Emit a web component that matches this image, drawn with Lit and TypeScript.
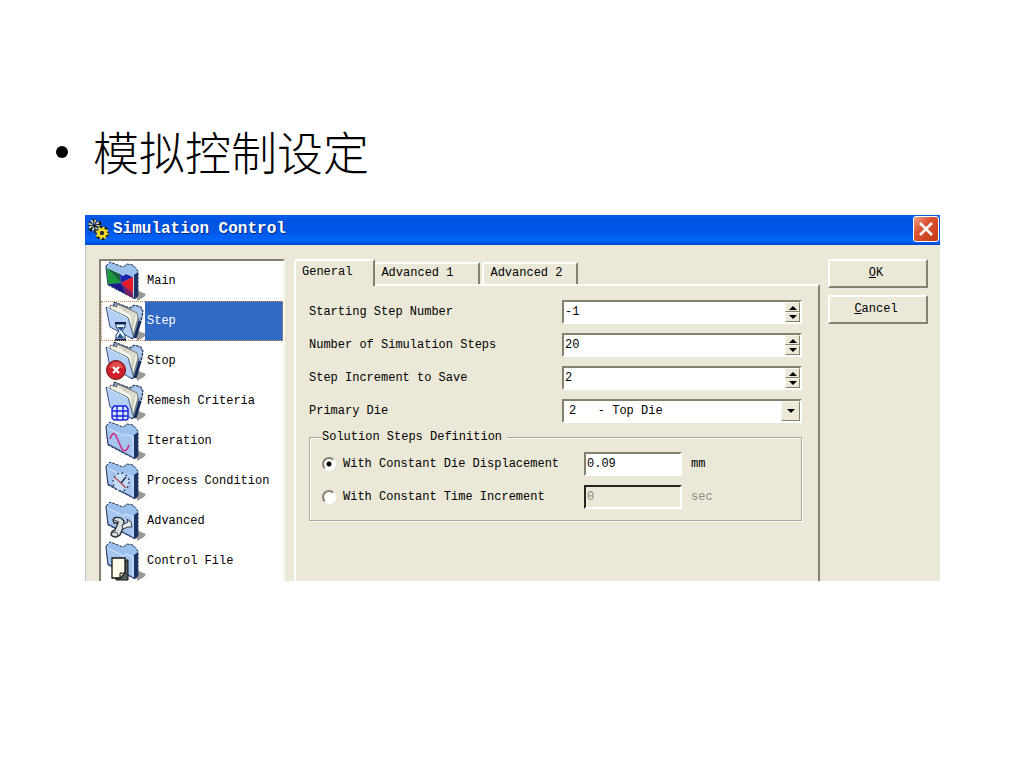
import { LitElement, html, svg, css } from "lit";
import { customElement, state } from "lit/decorators.js";
import { classMap } from "lit/directives/class-map.js";

const shadow = svg`<path d="M35 29 L40 31 L45 33 L43 36 L36 40Z" fill="#777" opacity=".75"/>`;

const closedFolder = svg`
  ${shadow}
  <path d="M5 5 L9 1 L22 6 L26 3 L32 4 L37 10 V35 L34 38 L7 24Z" fill="#9cc0ee" stroke="#26344f" stroke-dasharray="3 1"/>
  <path d="M33 14 L37 11 V35 L33 38Z" fill="#1d3265"/>
  <path d="M5 6 L19 12 L22 14 L25 12 L33 15 L33 37 L7 23Z" fill="#a6c6f0"/>
  <path d="M5 6 L7 23 L33 37" fill="none" stroke="#2b4068"/>
  <path d="M6 7 L19 13 L22 15 L25 13 L32 16 V36" fill="none" stroke="#cfe4ff"/>`;

const openFolder = svg`
  ${shadow}
  <path d="M13 1 L29 7 L33 4 L40 6 L42 10 L41 17 L35 35 L31 38 L10 22Z" fill="#7f9dc5" stroke="#1b2436" stroke-dasharray="3 1"/>
  <path d="M30 8 L34 5 L39 7 L41 11 L40 17 L36 16Z" fill="#a8c9ed"/>
  <path d="M9 4 L16 6 V3 L25 7 L36 12 L37 17 L32 35 L11 21Z" fill="#f2f2e6" stroke="#77786c"/>
  <path d="M18 6 L34 13 L31 30 M22 9 L31 14 V26" fill="none" stroke="#c0c0ad"/>
  <path d="M5 6 L26 16 Q28 17 28 20 L33 37 L30 37 L9 26Z" fill="#b3d0f4" stroke="#40577d"/>
  <path d="M6 7 L26 17" stroke="#e3f0ff"/>
  <path d="M39 20 L34 37" stroke="#162c5a" stroke-width="3"/>`;

const icons: Record<string, unknown> = {
  main: svg`${closedFolder}
    <path d="M6 7 L20 22 L7 23Z" fill="#179a38"/>
    <path d="M6 7 L19 13 L20 22Z" fill="#15623b"/>
    <path d="M19 13 L22 15 L25 13 L32 16 L20 22Z" fill="#1923ad"/>
    <path d="M20 22 L32 16 V32Z" fill="#e51b28"/>
    <path d="M20 22 L32 32 V37 L25 33Z" fill="#7b1b60"/>
    <path d="M20 22 L25 33 L7 23Z" fill="#171a88"/>`,
  step: svg`${openFolder}
    <path d="M14 22 H25 M14 39 H25" stroke="#101c46" stroke-width="2"/>
    <path d="M15 23 H24 V26 L21 30 L24 34 V38 H15 V34 L18 30 L15 26Z" fill="#e4f3fc" stroke="#17306e"/>
    <path d="M16 26 H23 L20 30Z M19 32 L23 37 H16Z" fill="#26508a"/>`,
  stop: svg`${openFolder}
    <circle cx="15" cy="29" r="9.5" fill="#cf2029" stroke="#65151b"/>
    <path d="M8 27 Q10 21 16 21 Q22 22 22 27" fill="#ea6a64" opacity=".6"/>
    <path d="M12 26 L18 32 M18 26 L12 32" stroke="#fff" stroke-width="2.2"/>`,
  remesh: svg`${openFolder}
    <path d="M13 25 H25 L27 28 V38 L25 39 H13 L11 37 V28Z" fill="#d8edff" stroke="#1a20dd" stroke-width="1.4"/>
    <path d="M16 25 V39 M22 25 V39 M11 30 H27 M11 35 H27" stroke="#1a20dd" stroke-width="1.4"/>`,
  iteration: svg`${closedFolder}
    <path d="M9 18 Q12 9 15 15 L21 28 Q25 33 28 24" fill="none" stroke="#cf2c82" stroke-width="1.5"/>`,
  process: svg`${closedFolder}
    <ellipse cx="20" cy="21" rx="8" ry="9" fill="#c5dcf7" stroke="#24324c" stroke-width="1.5" stroke-dasharray="1.5 3"/>
    <path d="M13 16 L20 22 L25 27" fill="none" stroke="#ba5360" stroke-width="1.5"/>
    <path d="M20 22 L25 16" stroke="#24324c" stroke-width="1.5"/>`,
  advanced: svg`${closedFolder}
    <path d="M12 19 Q13 15 20 17 L23 20 L22 27 L19 34 Q14 38 10 34 Q10 30 14 29 L17 22 L13 22Z" fill="#d7dde0" stroke="#262b30" stroke-width="1.3"/>
    <path d="M10 33 Q14 29 17 33 Q17 36 14 36 M13 19 L18 21" stroke="#394047" fill="none"/>
    <path d="M21 24 L27 21 L26 18 L30 21 L31 26 L27 26 L22 28Z" fill="#e7eced" stroke="#343a40"/>`,
  file: svg`${closedFolder}
    <path d="M15 19 H27 V39 H15Z" fill="#4f5b5d" stroke="#111"/>
    <path d="M11 17 H24 V32 L19 37 H11Z" fill="#fffce8" stroke="#161616" stroke-width="1.3"/>
    <path d="M24 32 L19 32 V37Z" fill="#cbc8b2" stroke="#161616"/>`,
};

const sections = [
  ["main", "Main"],
  ["step", "Step"],
  ["stop", "Stop"],
  ["remesh", "Remesh Criteria"],
  ["iteration", "Iteration"],
  ["process", "Process Condition"],
  ["advanced", "Advanced"],
  ["file", "Control File"],
];

const counters = [
  ["start", "Starting Step Number"],
  ["count", "Number of Simulation Steps"],
  ["save", "Step Increment to Save"],
];

@customElement("app-root")
export class AppRoot extends LitElement {
  @state() private section = "step";
  @state() private tab = "General";
  @state() private mode = "die";
  @state() private values: Record<string, string> = { start: "-1", count: "20", save: "2" };

  static styles = css`
    :host {
      display: block;
      min-height: 100vh;
      box-sizing: border-box;
      padding: 122px 84px 24px 85px;
      background: #fff;
      color: #000;
      font: 12px/16px "Liberation Mono", monospace;
    }
    * { box-sizing: border-box; }
    button, input, select { font: inherit; color: inherit; margin: 0; border-radius: 0; }
    .topics {
      list-style: none;
      margin: 0 0 37px -29px;
      padding: 0;
      font: 300 46px/56px "Noto Sans CJK SC", sans-serif;
    }
    .topic { display: flex; align-items: center; gap: 25px; }
    .topic::before { content: ""; width: 12px; height: 12px; margin-top: 4px; border-radius: 50%; background: #000; }
    .dialog { background: #ebe8d7; border-left: 1px solid #b9c3d8; }
    .titlebar {
      display: flex;
      align-items: center;
      gap: 4px;
      height: 30px;
      margin-left: -1px;
      padding: 0 1px 2px 3px;
      background: linear-gradient(#0a5ff0, #0054e3 15%, #0054e3 50%, #0066fc 85%, #0047c8);
      color: #fff;
    }
    .title { flex: 1; margin: 0; font: bold 16px/20px "Liberation Mono", monospace; text-shadow: 1px 1px #0a2a80; }
    .close {
      width: 26px;
      height: 26px;
      padding: 0;
      border: 1px solid #fff;
      border-radius: 3px;
      background: linear-gradient(135deg, #f0a088, #dc5230 40%, #c03a14);
    }
    .close svg, .logo, .item svg { display: block; }
    .body { display: flex; gap: 9px; padding: 14px 12px 0 13px; }
    .sections {
      width: 186px;
      border: 2px solid;
      border-color: #85816f #f8f7f0 #fff #85816f;
      border-bottom: 0;
      background: #fff;
    }
    .item {
      display: flex;
      align-items: center;
      width: 100%;
      height: 40px;
      padding: 0;
      border: 0;
      background: #fff;
      text-align: left;
    }
    .item svg { width: 44px; height: 40px; overflow: visible; }
    .caption { flex: 1; height: 40px; padding-left: 2px; line-height: 40px; white-space: nowrap; }
    .item.on { outline: 1px dotted #c98a50; outline-offset: -1px; }
    .item.on .caption { background: #316ac5; color: #fff; }
    .pages { flex: 1; display: flex; flex-direction: column; min-width: 0; }
    .tabs { display: flex; align-items: flex-end; height: 25px; }
    .tab {
      height: 22px;
      padding: 0 25px 3px 6px;
      border: 2px solid;
      border-color: #fff #85816f transparent #fff;
      border-left-width: 0;
      border-bottom: 0;
      border-radius: 3px 0 0 0;
      background: #ebe8d7;
      margin-right: 2px;
    }
    .tab + .tab + .tab { border-left-width: 2px; padding: 0 14px 3px 6px; margin: 0; }
    .tab.on {
      height: 27px;
      padding: 0 21px 4px 6px;
      border-left-width: 2px;
      margin: 0 0 -2px;
      z-index: 1;
    }
    .panel {
      flex: 1;
      padding: 14px 16px 0 13px;
      border: 2px solid;
      border-color: #fff #85816f #fff #fff;
      border-bottom: 0;
    }
    .rows { display: grid; grid-template-columns: 253px 1fr; row-gap: 9px; align-items: center; }
    .box {
      display: flex;
      height: 24px;
      border: 2px solid;
      border-color: #85816f #fff #fff #85816f;
      background: #fff;
    }
    .field { flex: 1; min-width: 0; width: 100%; padding: 0 1px; border: 0; outline: 0; background: transparent; }
    select.field { appearance: none; padding-left: 5px; }
    .spin { display: grid; grid-template-rows: 10px 10px; width: 15px; }
    .step, .drop {
      display: grid;
      place-items: center;
      padding: 0;
      border: 1px solid;
      border-color: #f8f7f0 #85816f #85816f #f8f7f0;
      background: #ebe8d7;
    }
    .drop { width: 19px; pointer-events: none; }
    .group {
      margin: 6px 0 0;
      padding: 7px 12px 11px;
      min-width: 0;
      border: 1px solid #aca899;
      box-shadow: 1px 1px #fff, inset 1px 1px #fff;
    }
    .legend { padding: 0 5px 0 0; background: #ebe8d7; }
    .choices { display: grid; grid-template-columns: 262px 98px 1fr; row-gap: 9px; align-items: center; }
    .choice { display: flex; align-items: center; gap: 7px; white-space: nowrap; }
    .radio {
      appearance: none;
      width: 14px;
      height: 14px;
      border: 2px solid;
      border-color: #85816f #fff #fff #85816f;
      border-radius: 50%;
      background: #fff;
    }
    .radio:checked { background: radial-gradient(circle, #000 2px, #fff 3px); }
    .unit { padding-left: 9px; }
    .off { color: #8d8a7c; }
    .box.off { background: transparent; border-color: #25241e #fff #fff #25241e; }
    .actions { display: flex; flex-direction: column; gap: 7px; width: 100px; margin-left: -1px; }
    .action {
      height: 29px;
      padding: 0 4px 2px 0;
      border: 2px solid;
      border-color: #fff #85816f #85816f #fff;
      background: #ebe8d7;
    }
  `;

  private bump(key: string, delta: number) {
    this.values = { ...this.values, [key]: String(Number(this.values[key]) + delta) };
  }

  private arrow(up: boolean) {
    return html`<svg width="8" height="5" viewBox="0 0 8 5" aria-hidden="true">
      <path d=${up ? "M0 5 L4 1 L8 5Z" : "M0 0 L4 4 L8 0Z"} />
    </svg>`;
  }

  private amount(id: string, label: string, value: string, unit: string) {
    const off = this.mode !== id;
    return html`
      <label class="choice">
        <input class="radio" type="radio" name="mode" .checked=${!off} @change=${() => (this.mode = id)} />
        ${label}
      </label>
      <span class=${classMap({ box: true, off })}>
        <input class="field" aria-label=${label} .value=${value} ?disabled=${off} />
      </span>
      <span class=${classMap({ unit: true, off })}>${unit}</span>
    `;
  }

  render() {
    return html`
      <ul class="topics"><li class="topic">模拟控制设定</li></ul>
      <section class="dialog" aria-labelledby="title">
        <header class="titlebar">
          <svg class="logo" width="21" height="22" viewBox="0 0 21 22" aria-hidden="true">
            <circle cx="7" cy="8" r="4" fill="none" stroke="#15180f" stroke-width="6" stroke-dasharray="2.6 1.6" />
            <circle cx="6" cy="7" r="3.6" fill="none" stroke="#d9d9b8" stroke-width="4" stroke-dasharray="1.4 1.4" />
            <circle cx="7" cy="8" r="1.5" fill="#1c1c14" />
            <circle cx="14" cy="15" r="4.5" fill="none" stroke="#17170b" stroke-width="5" stroke-dasharray="3 1.5" />
            <circle cx="14" cy="15" r="3.5" fill="none" stroke="#efd529" stroke-width="3" />
            <circle cx="14" cy="15" r="5.5" fill="none" stroke="#efd529" stroke-width="2" stroke-dasharray="2 2.3" />
            <circle cx="14" cy="15" r="2" fill="#2d290a" />
          </svg>
          <h1 class="title" id="title">Simulation Control</h1>
          <button class="close" aria-label="Close">
            <svg width="24" height="24" viewBox="0 0 24 24"><path d="M6 6 L18 18 M18 6 L6 18" stroke="#fff" stroke-width="2.5" /></svg>
          </button>
        </header>
        <div class="body">
          <nav class="sections">
            ${sections.map(
              ([id, name]) => html`
                <button class=${classMap({ item: true, on: this.section === id })} @click=${() => (this.section = id)}>
                  <svg viewBox="0 0 44 40" aria-hidden="true">${icons[id]}</svg>
                  <span class="caption">${name}</span>
                </button>
              `
            )}
          </nav>
          <div class="pages">
            <div class="tabs" role="tablist">
              ${["General", "Advanced 1", "Advanced 2"].map(
                (name) => html`<button
                  role="tab"
                  aria-selected=${this.tab === name ? "true" : "false"}
                  class=${classMap({ tab: true, on: this.tab === name })}
                  @click=${() => (this.tab = name)}
                >${name}</button>`
              )}
            </div>
            <div class="panel" role="tabpanel">
              <div class="rows">
                ${counters.map(
                  ([id, label]) => html`
                    <label for=${id}>${label}</label>
                    <span class="box">
                      <input class="field" id=${id} .value=${this.values[id]} />
                      <span class="spin">
                        <button class="step" aria-label="Increase" @click=${() => this.bump(id, 1)}>${this.arrow(true)}</button>
                        <button class="step" aria-label="Decrease" @click=${() => this.bump(id, -1)}>${this.arrow(false)}</button>
                      </span>
                    </span>
                  `
                )}
                <label for="die">Primary Die</label>
                <span class="box">
                  <select class="field" id="die"><option>2\u00a0\u00a0\u00a0- Top Die</option></select>
                  <span class="drop">${this.arrow(false)}</span>
                </span>
              </div>
              <fieldset class="group">
                <legend class="legend">Solution Steps Definition</legend>
                <div class="choices">
                  ${this.amount("die", "With Constant Die Displacement", "0.09", "mm")}
                  ${this.amount("time", "With Constant Time Increment", "0", "sec")}
                </div>
              </fieldset>
            </div>
          </div>
          <div class="actions">
            <button class="action"><u>O</u>K</button>
            <button class="action"><u>C</u>ancel</button>
          </div>
        </div>
      </section>
    `;
  }
}
